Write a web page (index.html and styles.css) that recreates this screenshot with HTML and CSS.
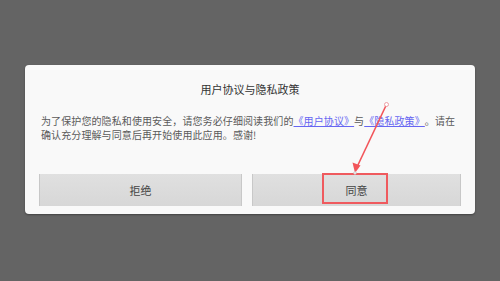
FILE: index.html
```html
<!DOCTYPE html>
<html lang="zh-CN">
  <head>
    <meta charset="UTF-8" />
    <title>用户协议与隐私政策</title>
    <link rel="stylesheet" href="styles.css">
  </head>
  <body>
    <div class="screen">
      <div class="dialog">
        <h1 class="dialog-title">用户协议与隐私政策</h1>
        <p class="dialog-text">为了保护您的隐私和使用安全，请您务必仔细阅读我们的<a href="#">《用户协议》</a>与<a href="#">《隐私政策》</a>。请在确认充分理解与同意后再开始使用此应用。感谢!</p>
        <div class="dialog-actions">
          <button class="btn btn-refuse">拒绝</button>
          <button class="btn btn-agree">同意</button>
        </div>
      </div>

      <!-- 标注 -->
      <div class="mark-box"></div>
      <svg class="mark-arrow" width="500" height="281" viewBox="0 0 500 281">
        <line x1="386.5" y1="104.5" x2="357" y2="167" stroke="#f2555a" stroke-width="1.6" />
        <polygon points="355,173 352.5,162.5 360.5,165.5" fill="#f2555a" />
        <circle cx="386.5" cy="104.5" r="2" fill="#fff" stroke="#e88a90" stroke-width="0.8" />
        <circle cx="355" cy="173" r="1.4" fill="#eee" stroke="#bbb" stroke-width="0.5" />
      </svg>
    </div>
  </body>
</html>
```

FILE: styles.css
```css
* {
  box-sizing: border-box;
  margin: 0;
  padding: 0;
  font-family: "Noto Sans CJK SC", "Noto Sans", sans-serif;
}

body {
  background-color: #646464;
  width: 500px;
  height: 281px;
  overflow: hidden;
}

.screen {
  position: relative;
  width: 500px;
  height: 281px;
  padding: 65px 25px 0;
}

.dialog {
  width: 450px;
  height: 149px;
  background-color: #f9f9f9;
  border-radius: 4px;
  box-shadow: 0 1px 2px rgba(0, 0, 0, 0.35);
  padding: 16px 14px 8px;
}

.dialog-title {
  font-size: 11px;
  font-weight: normal;
  line-height: 16px;
  color: #333;
  text-align: center;
}

.dialog-text {
  margin-top: 17px;
  padding: 0 3px 0 2px;
  font-size: 10px;
  line-height: 14px;
  letter-spacing: 0.1px;
  text-spacing-trim: space-all;
  color: #5a5a5a;
  height: 28px;
}

.dialog-text a {
  color: #6666f2;
  text-decoration: underline;
}

.dialog-actions {
  margin-top: 32px;
  display: flex;
  gap: 10px;
}

.btn {
  height: 32px;
  border: none;
  border-left: 1px solid #c8c8c8;
  border-right: 1px solid #c8c8c8;
  background: linear-gradient(#e0e0e0, #d7d7d7);
  color: #444;
  font-size: 11px;
  cursor: pointer;
}

.btn-refuse {
  width: 203px;
}

.btn-agree {
  width: 209px;
}

.mark-box {
  position: absolute;
  left: 322px;
  top: 173px;
  width: 66px;
  height: 31px;
  border: 2px solid #ef5a5e;
}

.mark-arrow {
  position: absolute;
  left: 0;
  top: 0;
}
```
